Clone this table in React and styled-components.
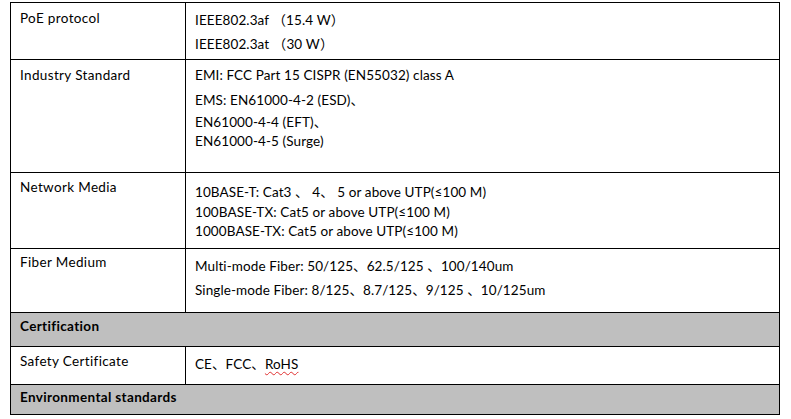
import React from "react";
import styled, { createGlobalStyle } from "styled-components";

const GlobalStyle = createGlobalStyle`
  html, body {
    margin: 0;
    padding: 0;
    background: #fff;
  }
  body {
    font-family: Lato, "Noto Sans CJK SC", sans-serif;
    font-size: 13.5px;
    color: #000;
  }
`;

const Page = styled.div`
  padding: 2px 0 0 10px;
`;

const Table = styled.div`
  width: 770px;
  box-sizing: border-box;
  border: 1px solid #000;
  border-bottom: none;
`;

const Row = styled.div`
  display: grid;
  grid-template-columns: 175px 1fr;
  height: ${(p) => p.$h}px;
  box-sizing: border-box;
  border-bottom: 1px solid #000;
`;

const SectionRow = styled.div`
  height: ${(p) => p.$h}px;
  box-sizing: border-box;
  border-bottom: 1px solid #000;
  background: #bfbfbf;
  padding: ${(p) => p.$pt}px 0 0 9px;
  font-weight: 700;
  line-height: 18px;
  letter-spacing: 0.35px;
`;

const Label = styled.div`
  border-right: 1px solid #000;
  padding: ${(p) => p.$pt}px 0 0 9px;
  line-height: 18px;
  letter-spacing: 0.35px;
`;

const Value = styled.div`
  padding: ${(p) => p.$pt}px 0 0 9px;
  line-height: ${(p) => p.$lh || 18}px;
  letter-spacing: 0.1px;
`;

const Line = styled.div`
  white-space: nowrap;
  margin-top: ${(p) => p.$mt || 0}px;
`;

const Squiggle = styled.span`
  text-decoration: underline wavy #e03030;
  text-decoration-thickness: 1px;
  text-underline-offset: 2px;
`;

export default function App() {
  return (
    <>
      <GlobalStyle />
      <Page>
        <Table>
          <Row $h={57}>
            <Label $pt={6}>PoE protocol</Label>
            <Value $pt={5} $lh={24}>
              <Line>IEEE802.3af （15.4 W）</Line>
              <Line>IEEE802.3at （30 W）</Line>
            </Value>
          </Row>

          <Row $h={113}>
            <Label $pt={6}>Industry Standard</Label>
            <Value $pt={6}>
              <Line>EMI: FCC Part 15 CISPR (EN55032) class A</Line>
              <Line $mt={7}>EMS: EN61000-4-2 (ESD)、</Line>
              <Line $mt={4}>EN61000-4-4 (EFT)、</Line>
              <Line $mt={1}>EN61000-4-5 (Surge)</Line>
            </Value>
          </Row>

          <Row $h={76}>
            <Label $pt={5}>Network Media</Label>
            <Value $pt={10} $lh={19.5}>
              <Line>10BASE-T: Cat3 、 4、 5 or above UTP(≤100 M)</Line>
              <Line>100BASE-TX: Cat5 or above UTP(≤100 M)</Line>
              <Line>1000BASE-TX: Cat5 or above UTP(≤100 M)</Line>
            </Value>
          </Row>

          <Row $h={64}>
            <Label $pt={4}>Fiber Medium</Label>
            <Value $pt={5} $lh={24}>
              <Line>Multi-mode Fiber: 50/125、62.5/125 、100/140um</Line>
              <Line>Single-mode Fiber: 8/125、8.7/125、9/125 、10/125um</Line>
            </Value>
          </Row>

          <SectionRow $h={34} $pt={4}>Certification</SectionRow>

          <Row $h={38}>
            <Label $pt={5}>Safety Certificate</Label>
            <Value $pt={8}>
              <Line>
                CE、FCC、<Squiggle>RoHS</Squiggle>
              </Line>
            </Value>
          </Row>

          <SectionRow $h={30} $pt={3}>Environmental standards</SectionRow>
        </Table>
      </Page>
    </>
  );
}
